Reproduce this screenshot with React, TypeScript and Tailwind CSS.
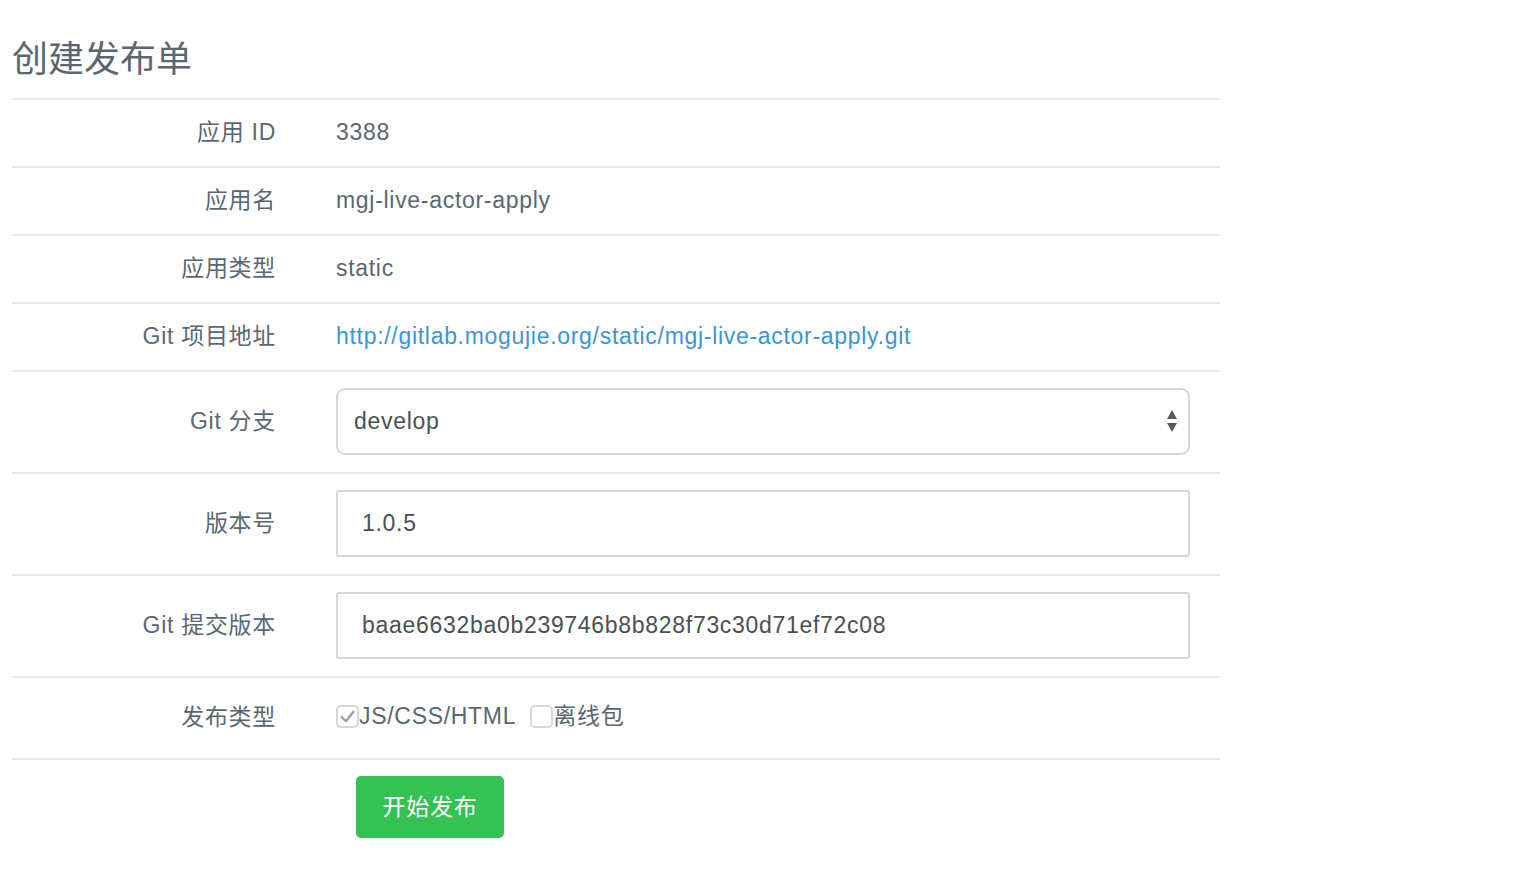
import React from "react";

const font = { fontFamily: '"Helvetica Neue", "Liberation Sans", Arial, "Noto Sans CJK SC", sans-serif' };

const Row: React.FC<{ label: string; h: string; children: React.ReactNode }> = ({ label, h, children }) => (
    <div className={`flex items-center border-b-2 border-[#e6eaeb] ${h}`}>
        <div className="w-[264px] shrink-0 text-right -mt-[1px]">{label}</div>
        <div className="ml-[60px] flex-1 flex items-center">{children}</div>
    </div>
);

const Check: React.FC<{ checked?: boolean }> = ({ checked }) => (
    <span className="inline-flex items-center justify-center w-[23px] h-[23px] rounded-[5px] border-2 border-[#d5d8da] bg-white">
        {checked && (
            <svg width="17" height="17" viewBox="0 0 16 16">
                <path d="M2.5 8.5 L6.5 12.5 L13.5 3.5" fill="none" stroke="#9a9fa3" strokeWidth="2.2" strokeLinecap="round" strokeLinejoin="round" />
            </svg>
        )}
    </span>
);

export default function App() {
    return (
        <div className="w-[1522px] h-[880px] bg-white text-[#5b6770] text-[23px] tracking-[0.7px]" style={font}>
            <div className="w-[1208px] ml-[12px]">
                <h1 className="h-[98px] pt-[36px] text-[36px] leading-[48px] font-normal tracking-normal">创建发布单</h1>
                <div className="border-t-2 border-[#e6eaeb]">
                    <Row label="应用 ID" h="h-[68px]"><span className="-mt-[1px]">3388</span></Row>
                    <Row label="应用名" h="h-[68px]"><span className="-mt-[1px]">mgj-live-actor-apply</span></Row>
                    <Row label="应用类型" h="h-[68px]"><span className="-mt-[1px]">static</span></Row>
                    <Row label="Git 项目地址" h="h-[68px]">
                        <a className="text-[#3a95d7] -mt-[1px]" href="#">http://gitlab.mogujie.org/static/mgj-live-actor-apply.git</a>
                    </Row>
                    <Row label="Git 分支" h="h-[102px]">
                        <div className="relative w-[854px] h-[67px] -mt-[2px]">
                            <select className="appearance-none w-full h-full rounded-[9px] border-2 border-[#d5d8da] bg-white pl-[16px] text-[#4a4f54] tracking-[0.7px] outline-none" defaultValue="develop" style={font}>
                                <option>develop</option>
                                <option>master</option>
                            </select>
                            <svg className="absolute right-[12px] top-[21px] pointer-events-none" width="12" height="24" viewBox="0 0 12 24">
                                <path d="M6 1 L11 10 L1 10 Z" fill="#555a5e" />
                                <path d="M6 23 L11 14 L1 14 Z" fill="#555a5e" />
                            </svg>
                        </div>
                    </Row>
                    <Row label="版本号" h="h-[102px]">
                        <input className="w-[854px] h-[67px] -mt-[1px] rounded-[3px] border-2 border-[#d5d8da] px-[24px] text-[#4a4f54] tracking-[0.7px] outline-none" defaultValue="1.0.5" style={font} />
                    </Row>
                    <Row label="Git 提交版本" h="h-[102px]">
                        <input className="w-[854px] h-[67px] -mt-[1px] rounded-[3px] border-2 border-[#d5d8da] px-[24px] text-[#4a4f54] tracking-[0.7px] outline-none" defaultValue="baae6632ba0b239746b8b828f73c30d71ef72c08" style={font} />
                    </Row>
                    <Row label="发布类型" h="h-[82px]">
                        <label className="flex items-center -mt-[3px]">
                            <Check checked />
                            <span>JS/CSS/HTML</span>
                        </label>
                        <label className="flex items-center ml-[14px] -mt-[3px]">
                            <Check />
                            <span>离线包</span>
                        </label>
                    </Row>
                </div>
                <div className="pl-[344px] pt-[16px]">
                    <button className="w-[148px] h-[62px] rounded-[5px] bg-[#34c255] text-white text-[23px] tracking-[0.7px]" style={font}>开始发布</button>
                </div>
            </div>
        </div>
    );
}
